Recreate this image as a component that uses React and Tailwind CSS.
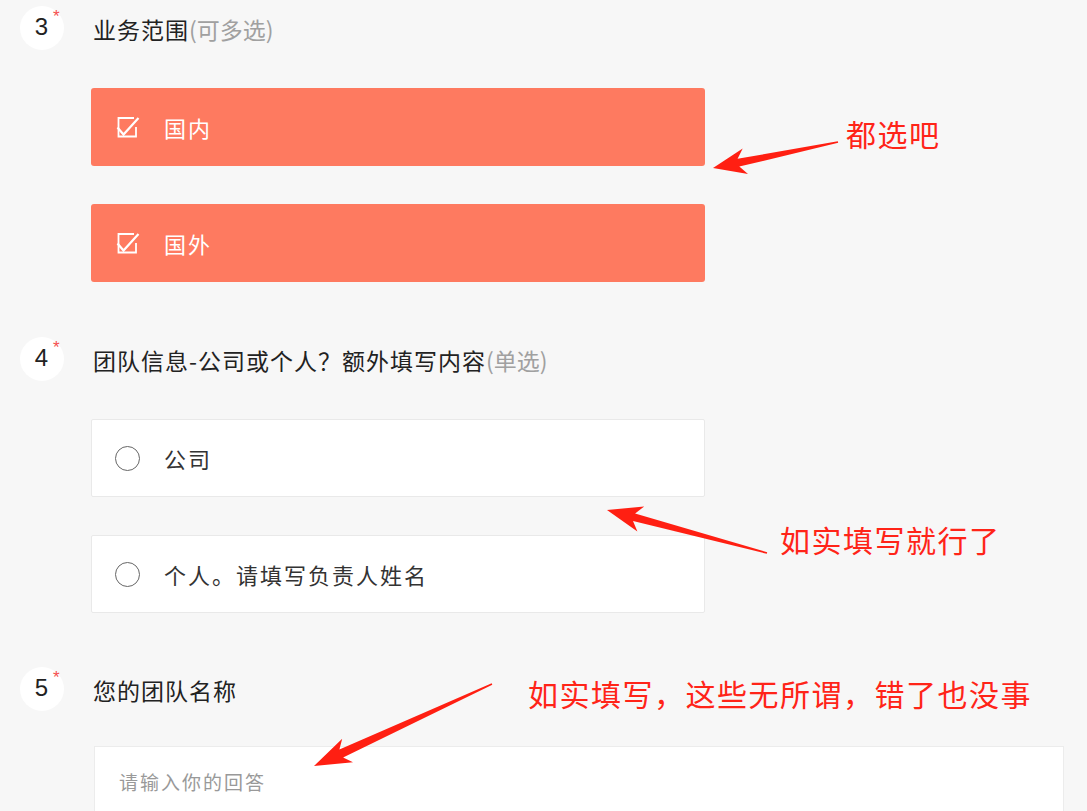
const cjk = { fontFamily: '"Noto Sans CJK SC", "Noto Sans", sans-serif' }

function arrowPoints(x1, y1, x2, y2, headLen, headHalf, shaftHalf) {
  const len = Math.hypot(x2 - x1, y2 - y1)
  const ux = (x2 - x1) / len
  const uy = (y2 - y1) / len
  const nx = -uy
  const ny = ux
  const bx = x2 - ux * headLen
  const by = y2 - uy * headLen
  const wx = bx - ux * 7
  const wy = by - uy * 7
  const pts = [
    [x1 + nx * 0.8, y1 + ny * 0.8],
    [bx + nx * shaftHalf, by + ny * shaftHalf],
    [wx + nx * headHalf, wy + ny * headHalf],
    [x2, y2],
    [wx - nx * headHalf, wy - ny * headHalf],
    [bx - nx * shaftHalf, by - ny * shaftHalf],
    [x1 - nx * 0.8, y1 - ny * 0.8],
  ]
  return pts.map((p) => p.map((v) => v.toFixed(1)).join(',')).join(' ')
}

function QNum({ n }) {
  return (
    <div className="relative w-11 h-11 shrink-0 rounded-full bg-white flex items-center justify-center">
      <span className="text-[24px] leading-none text-[#222] mt-[-2px] mr-[1px]" style={{ fontFamily: '"Liberation Sans", Arial, sans-serif' }}>
        {n}
      </span>
      <span className="absolute left-[33px] top-[2px] text-[17px] leading-none text-[#f54e4e]" style={{ fontFamily: '"Liberation Sans", Arial, sans-serif' }}>
        *
      </span>
    </div>
  )
}

function Title({ children, hint }) {
  return (
    <div className="ml-[29px] mt-[8px] text-[23px] leading-[30px] tracking-[1px] text-[#222]" style={cjk}>
      {children}
      {hint && <span className="text-[#a0a0a0] tracking-[0px]">{hint}</span>}
    </div>
  )
}

function CheckIcon() {
  return (
    <svg width="26" height="26" viewBox="0 0 26 26" fill="none" stroke="white" strokeWidth="1.8">
      <path d="M21 13 V22.5 H3.5 V4 H19" />
      <path d="M2.5 13.5 L8.5 20.5 L23.5 4" strokeWidth="2.2" strokeLinejoin="miter" />
    </svg>
  )
}

function Checked({ label }) {
  return (
    <div className="w-[614px] h-[78px] rounded-[3px] bg-[#fe7a60] flex items-center pl-[24px]">
      <CheckIcon />
      <span className="ml-[23px] text-[22px] tracking-[2px] text-white" style={cjk}>
        {label}
      </span>
    </div>
  )
}

function Radio({ label }) {
  return (
    <div className="w-[614px] h-[78px] rounded-[2px] bg-white border border-[#e9e9e9] flex items-center pl-[23px]">
      <span className="w-[25px] h-[25px] rounded-full border-[1.5px] border-[#666]" />
      <span className="ml-[24px] text-[22px] tracking-[2px] text-[#333]" style={cjk}>
        {label}
      </span>
    </div>
  )
}

export default function App() {
  return (
    <div className="relative w-full h-[811px] overflow-hidden bg-[#f7f7f7]">
      <div className="pl-[20px] pt-[6px] flex flex-col">
        {/* Q3 */}
        <div className="flex items-start">
          <QNum n="3" />
          <Title hint="(可多选)">业务范围</Title>
        </div>
        <div className="ml-[71px] mt-[38px] flex flex-col gap-[38px]">
          <Checked label="国内" />
          <Checked label="国外" />
        </div>

        {/* Q4 */}
        <div className="flex items-start mt-[55px]">
          <QNum n="4" />
          <Title hint="(单选)">团队信息-公司或个人？额外填写内容</Title>
        </div>
        <div className="ml-[71px] mt-[38px] flex flex-col gap-[38px]">
          <Radio label="公司" />
          <Radio label="个人。请填写负责人姓名" />
        </div>

        {/* Q5 */}
        <div className="flex items-start mt-[54px]">
          <QNum n="5" />
          <Title>您的团队名称</Title>
        </div>
        <div className="ml-[74px] mt-[35px] w-[970px] h-[100px] bg-white border border-[#ececec] pl-[24px] pt-[20px]">
          <span className="text-[19px] leading-[30px] tracking-[2px] text-[#999]" style={cjk}>
            请输入你的回答
          </span>
        </div>
      </div>

      {/* annotations */}
      <svg className="absolute inset-0 pointer-events-none" width="1087" height="811">
        <polygon points={arrowPoints(838, 142, 713, 168, 26, 13, 4)} fill="#ff1f12" />
        <polygon points={arrowPoints(767, 553, 607, 510, 28, 13, 4)} fill="#ff1f12" />
        <polygon points={arrowPoints(492, 684, 314, 766, 30, 13, 4.5)} fill="#ff1f12" />
      </svg>
      <div className="absolute left-[846px] top-[114px] text-[30px] leading-[38px] tracking-[1.5px] text-[#ff2418]" style={cjk}>
        都选吧
      </div>
      <div className="absolute left-[780px] top-[520px] text-[30px] leading-[38px] tracking-[1.5px] text-[#ff2418]" style={cjk}>
        如实填写就行了
      </div>
      <div className="absolute left-[528px] top-[674px] text-[30px] leading-[38px] tracking-[1.5px] text-[#ff2418]" style={cjk}>
        如实填写，这些无所谓，错了也没事
      </div>
    </div>
  )
}
